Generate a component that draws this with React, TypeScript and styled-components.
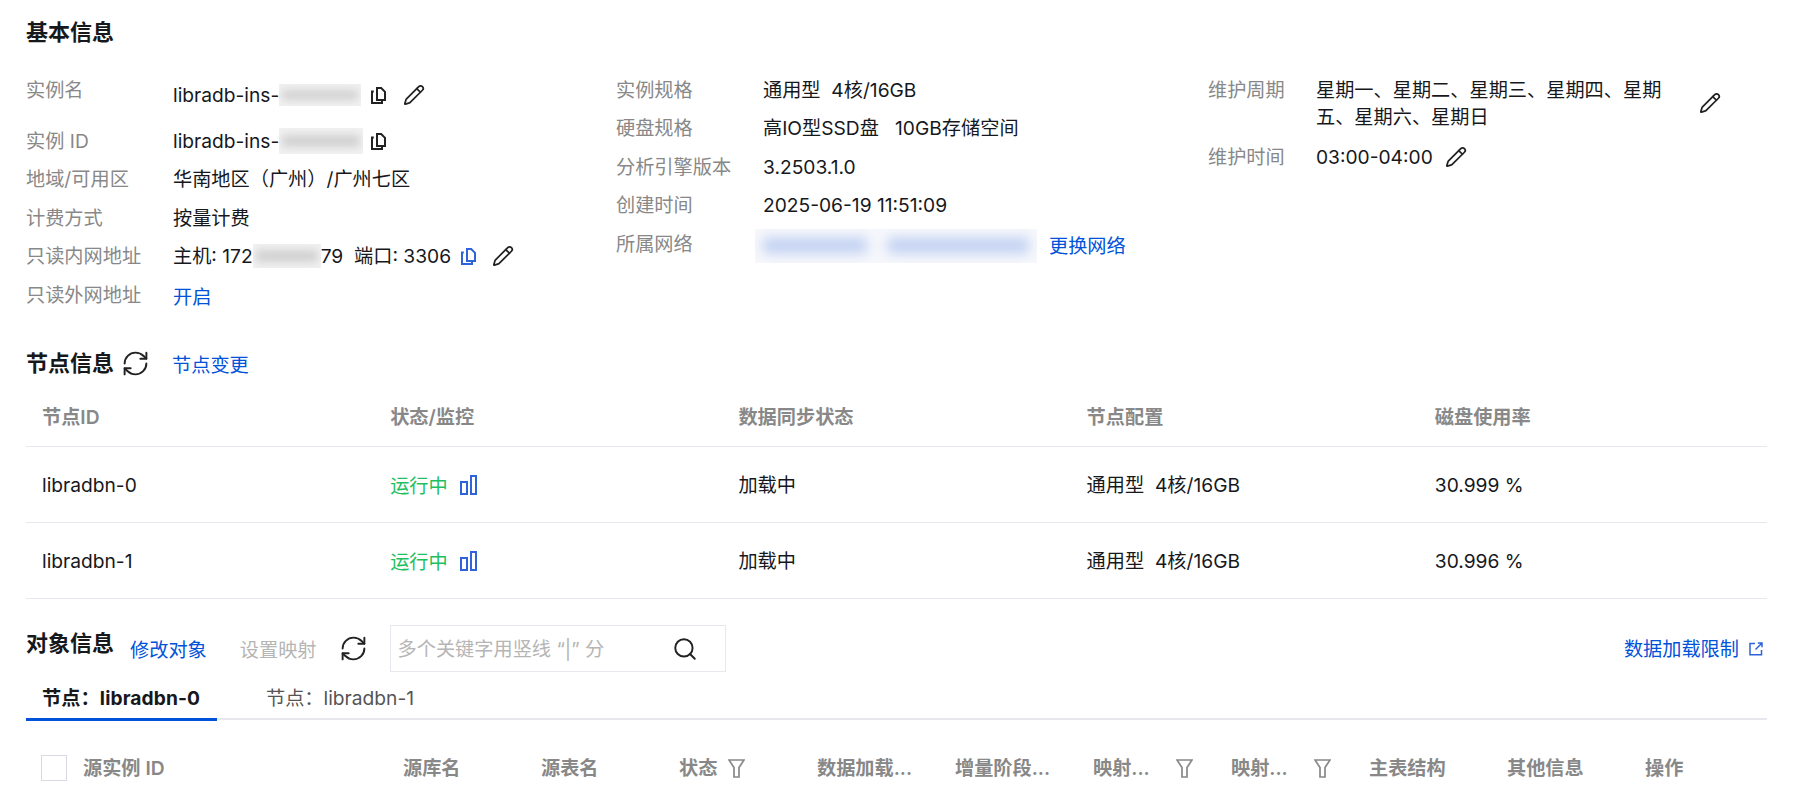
import React from 'react';
import styled, { createGlobalStyle } from 'styled-components';
import { Pencil, RefreshCw, Search } from 'lucide-react';

const Global = createGlobalStyle`
  html, body { margin: 0; padding: 0; background: #fff; overflow: hidden; }
  body { font-family: Inter, "Noto Sans CJK SC", sans-serif; font-size: 19.2px; color: #16181c; }
`;
const Page = styled.div`
  width: 1810px; height: 792px; overflow: hidden; box-sizing: border-box;
  padding: 17px 43px 0 26px; font-size: 19.2px; line-height: 26px;
`;
const Title = styled.h2`
  margin: 0; font-size: 22px; line-height: 30px; font-weight: 700; color: #16181c;
`;
const InfoGrid = styled.div`
  display: grid; grid-template-columns: 590px 592px 1fr; margin-top: 30px; height: 268px;
`;
const Column = styled.div`display: flex; flex-direction: column;`;
const Row = styled.div<{ $h?: number }>`
  display: flex; align-items: flex-start; height: ${p => p.$h ?? 38.4}px;
`;
const Label = styled.div<{ $w?: number }>`
  flex: 0 0 ${p => p.$w ?? 147}px; color: #888; line-height: 26px;
`;
const Value = styled.div<{ $top?: number }>`
  display: flex; align-items: center; min-height: 26px; margin-top: ${p => p.$top ?? 0}px; white-space: pre;
`;
const WrapValue = styled.div`
  flex: 0 0 352px; line-height: 27px;
`;
const Link = styled.a<{ $gap?: number; $top?: number }>`
  color: #0052d9; text-decoration: none; cursor: pointer; white-space: nowrap;
  margin-left: ${p => p.$gap ?? 0}px; margin-top: ${p => p.$top ?? 0}px;
`;
const Patch = styled.span<{ $w: number; $h: number; $blue?: boolean }>`
  display: inline-block; position: relative; overflow: hidden; flex: none;
  width: ${p => p.$w}px; height: ${p => p.$h}px;
  background: ${p => (p.$blue ? '#f7f8fc' : '#f2f2f2')};
  &::before {
    content: ''; position: absolute; left: ${p => (p.$blue ? 8 : 3)}px; right: ${p => (p.$blue ? 8 : 3)}px; top: 26%; bottom: 26%;
    background: ${p => (p.$blue
      ? 'linear-gradient(90deg, #c4d3f2 0 38%, #f4f6fb 40% 46%, #c4d3f2 48% 100%)'
      : '#d0d0d0')};
    filter: blur(${p => (p.$blue ? 6 : 4)}px);
  }
`;
const NetPatch = styled(Patch)`
  margin-top: -4px; margin-bottom: -4px; margin-left: -8px;
`;
const IconSlot = styled.span<{ $gap?: number; $color?: string; $top?: number }>`
  display: inline-flex; flex: none; margin-left: ${p => p.$gap ?? 0}px; margin-top: ${p => p.$top ?? 0}px;
  color: ${p => p.$color ?? '#222'};
`;
const SectionHead = styled.div`
  display: flex; align-items: center; height: 36px;
`;
const SectionTitle = styled(Title)`margin-top: 0;`;
const TableHead = styled.div`
  display: grid; grid-template-columns: repeat(5, 1fr); align-items: center; height: 60px;
  border-bottom: 1px solid #e7e8ee; margin-top: 5px;
  color: #888; font-weight: 600;
`;
const TableRow = styled.div`
  display: grid; grid-template-columns: repeat(5, 1fr); align-items: center; height: 75px;
  border-bottom: 1px solid #e7e8ee;
`;
const Cell = styled.div`padding: 1px 0 0 16px; display: flex; align-items: center; white-space: pre;`;
const Running = styled.span`color: #1fbf5f; margin-top: 2px;`;
const Toolbar = styled.div`
  display: flex; align-items: center; height: 47px; margin-top: 26px;
`;
const ToolbarTitle = styled(Title)`margin-top: -11px;`;
const Disabled = styled.span`color: #b5b5b5; margin: 3px 0 0 33px;`;
const SearchBox = styled.div`
  display: flex; align-items: center; justify-content: space-between; box-sizing: border-box;
  width: 336px; height: 47px; margin-left: 22px; padding: 1px 27px 0 7px;
  border: 1px solid #e7e8ee; color: #b5b5b5; white-space: pre;
`;
const Spacer = styled.div`flex: 1;`;
const Tabs = styled.div`
  display: flex; height: 48px; box-sizing: border-box; border-bottom: 2px solid #e7e8ee;
`;
const Tab = styled.div<{ $active?: boolean }>`
  height: 46px; padding: 0 16px; line-height: 52px; white-space: pre;
  font-weight: ${p => (p.$active ? 700 : 400)};
  color: ${p => (p.$active ? '#16181c' : '#555')};
  margin-right: 33px;
  ${p => p.$active && 'box-sizing: content-box; width: 159px; border-bottom: 3px solid #0052d9; margin-bottom: -3px; letter-spacing: 0.1px;'}
`;
const ObjectHead = styled.div`
  display: grid; grid-template-columns: 361px repeat(10, 138px); align-items: center;
  margin-top: 35px; height: 26px; color: #888; font-weight: 600;
`;
const FirstHead = styled.div`display: flex; align-items: center; padding-left: 15px; white-space: pre;`;
const Check = styled.span`
  display: inline-block; box-sizing: border-box; width: 26px; height: 26px; margin-right: 16px;
  border: 1px solid #d8d9e6; background: #fff;
`;
const HeadCell = styled.div<{ $gap?: number }>`
  display: flex; align-items: center; gap: ${p => p.$gap ?? 11}px; padding-left: 16px; white-space: nowrap;
`;

const CopyIcon = ({ color = '#222' }: { color?: string }) => (
  <svg width="15" height="17" viewBox="0 0 15 17" fill="none" stroke={color} strokeWidth="2">
    <path d="M6 1h4.2L14 4.8V13H6z" />
    <path d="M2.8 4.5H1V16h10v-2.6" />
  </svg>
);
const BarsIcon = () => (
  <svg width="17" height="20" viewBox="0 0 17 20" fill="none" stroke="#2f63d9" strokeWidth="2">
    <rect x="1" y="7" width="6" height="12" />
    <rect x="11" y="1" width="5" height="18" />
  </svg>
);
const FilterIcon = () => (
  <svg width="17" height="19" viewBox="0 0 17 19" fill="none" stroke="#888" strokeWidth="1.7">
    <path d="M1 1h15l-5 7.5V18H6V8.5z" />
  </svg>
);
const ExternalIcon = () => (
  <svg width="14" height="14" viewBox="0 0 14 14" fill="none" stroke="#2f63d9" strokeWidth="1.5">
    <path d="M6 1.5H1v11.2h11.5V8" />
    <path d="M6.5 7.5 13 1M8.8 1H13v4.2" />
  </svg>
);
const Edit = () => <Pencil size={22} strokeWidth={1.9} />;
const Refresh = () => <RefreshCw size={29} strokeWidth={1.6} />;

const nodes = [
  { id: 'libradbn-0', disk: '30.999 %' },
  { id: 'libradbn-1', disk: '30.996 %' },
];
const nodeHeads = ['节点ID', '状态/监控', '数据同步状态', '节点配置', '磁盘使用率'];
const objectHeads: { text: string; filter?: boolean; gap?: number }[] = [
  { text: '源库名' }, { text: '源表名' }, { text: '状态', filter: true },
  { text: '数据加载...' }, { text: '增量阶段...' }, { text: '映射...', filter: true, gap: 26 },
  { text: '映射...', filter: true, gap: 26 }, { text: '主表结构' }, { text: '其他信息' }, { text: '操作' },
];
const specRows = [
  ['实例规格', '通用型  4核/16GB'],
  ['硬盘规格', '高IO型SSD盘   10GB存储空间'],
  ['分析引擎版本', '3.2503.1.0'],
  ['创建时间', '2025-06-19 11:51:09'],
];

export default function App() {
  return (
    <Page>
      <Global />
      <Title>基本信息</Title>
      <InfoGrid>
        <Column>
          <Row $h={51}>
            <Label>实例名</Label>
            <Value $top={5}>
              libradb-ins-<Patch $w={82} $h={22} />
              <IconSlot $gap={10}><CopyIcon /></IconSlot>
              <IconSlot $gap={17}><Edit /></IconSlot>
            </Value>
          </Row>
          <Row>
            <Label>实例 ID</Label>
            <Value>
              libradb-ins-<Patch $w={84} $h={26} />
              <IconSlot $gap={8}><CopyIcon /></IconSlot>
            </Value>
          </Row>
          <Row><Label>地域/可用区</Label><Value>华南地区（广州）/广州七区</Value></Row>
          <Row><Label>计费方式</Label><Value>按量计费</Value></Row>
          <Row>
            <Label>只读内网地址</Label>
            <Value>
              主机: 172<Patch $w={68} $h={24} />79  端口: 3306
              <IconSlot $gap={10}><CopyIcon color="#2f63d9" /></IconSlot>
              <IconSlot $gap={16}><Edit /></IconSlot>
            </Value>
          </Row>
          <Row>
            <Label>只读外网地址</Label>
            <Value $top={2}><Link>开启</Link></Value>
          </Row>
        </Column>
        <Column>
          {specRows.map(([k, v]) => (
            <Row key={k}><Label>{k}</Label><Value>{v}</Value></Row>
          ))}
          <Row>
            <Label>所属网络</Label>
            <Value $top={2}>
              <NetPatch $w={282} $h={34} $blue />
              <Link $gap={12}>更换网络</Link>
            </Value>
          </Row>
        </Column>
        <Column>
          <Row $h={67}>
            <Label $w={108}>维护周期</Label>
            <WrapValue>星期一、星期二、星期三、星期四、星期五、星期六、星期日</WrapValue>
            <IconSlot $gap={31} $top={15}><Edit /></IconSlot>
          </Row>
          <Row>
            <Label $w={108}>维护时间</Label>
            <Value>03:00-04:00<IconSlot $gap={12}><Edit /></IconSlot></Value>
          </Row>
        </Column>
      </InfoGrid>

      <SectionHead>
        <SectionTitle>节点信息</SectionTitle>
        <IconSlot $gap={7}><Refresh /></IconSlot>
        <Link $gap={22} $top={3}>节点变更</Link>
      </SectionHead>
      <TableHead>
        {nodeHeads.map(h => <Cell key={h}>{h}</Cell>)}
      </TableHead>
      {nodes.map(n => (
        <TableRow key={n.id}>
          <Cell>{n.id}</Cell>
          <Cell><Running>运行中</Running><IconSlot $gap={12}><BarsIcon /></IconSlot></Cell>
          <Cell>加载中</Cell>
          <Cell>通用型  4核/16GB</Cell>
          <Cell>{n.disk}</Cell>
        </TableRow>
      ))}

      <Toolbar>
        <ToolbarTitle>对象信息</ToolbarTitle>
        <Link $gap={16} $top={3}>修改对象</Link>
        <Disabled>设置映射</Disabled>
        <IconSlot $gap={22}><Refresh /></IconSlot>
        <SearchBox>
          多个关键字用竖线 “|” 分
          <Search size={26} strokeWidth={1.8} color="#222" />
        </SearchBox>
        <Spacer />
        <Link $top={1}>数据加载限制</Link>
        <IconSlot $gap={10}><ExternalIcon /></IconSlot>
        <IconSlot $gap={4} />
      </Toolbar>
      <Tabs>
        <Tab $active>节点：libradbn-0</Tab>
        <Tab>节点：libradbn-1</Tab>
      </Tabs>
      <ObjectHead>
        <FirstHead><Check />源实例 ID</FirstHead>
        {objectHeads.map((h, i) => (
          <HeadCell key={i} $gap={h.gap}>{h.text}{h.filter && <FilterIcon />}</HeadCell>
        ))}
      </ObjectHead>
    </Page>
  );
}
